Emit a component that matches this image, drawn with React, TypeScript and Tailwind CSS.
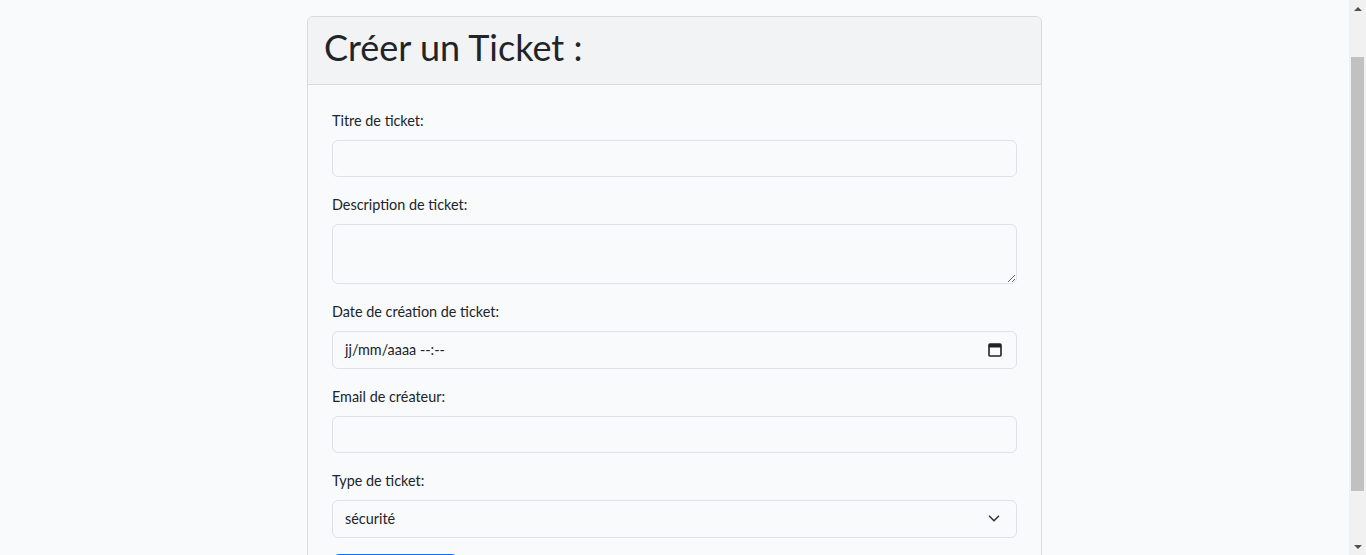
import { useEffect } from 'react';

const font = { fontFamily: 'Lato, "Noto Sans", sans-serif' };

function Label({ text }: { text: string }) {
  return <label className="block mb-2 text-[14.4px] leading-[23px] text-[#212529]">{text}</label>;
}

function CalendarIcon() {
  return (
    <svg width="14" height="14" viewBox="0 0 14 14">
      <rect x="1" y="1" width="12" height="12" rx="1" fill="none" stroke="#222" strokeWidth="1.6" />
      <rect x="1" y="1" width="12" height="3.5" fill="#222" />
    </svg>
  );
}

function Chevron() {
  return (
    <svg width="12" height="9" viewBox="0 0 16 12">
      <path d="M2 3l6 6 6-6" fill="none" stroke="#343a40" strokeWidth="2.2" strokeLinecap="round" strokeLinejoin="round" />
    </svg>
  );
}

// the page scrollbar is hidden in the capture, so draw it over the right edge
function Scrollbar() {
  return (
    <div className="fixed top-0 right-0 h-screen w-[17px] bg-[#f1f1f1] flex flex-col items-center">
      <div className="h-[17px] flex items-center justify-center">
        <div className="w-0 h-0 border-x-[4px] border-x-transparent border-b-[4px] border-b-[#505050]" />
      </div>
      <div className="flex-1 w-full px-[2px] pt-[40px] pb-[47px]">
        <div className="w-full h-full bg-[#c1c1c1]" />
      </div>
      <div className="h-[17px] flex items-center justify-center">
        <div className="w-0 h-0 border-x-[4px] border-x-transparent border-t-[4px] border-t-[#505050]" />
      </div>
    </div>
  );
}

export default function App() {
  useEffect(() => {
    window.scrollTo(0, 51);
  }, []);

  let inputCls =
    'block w-full h-[37.4px] px-3 rounded-[6px] border border-[#dee2e6] bg-[#f8fafc] text-[14.4px] text-[#212529] outline-none';

  return (
    <div className="min-h-screen bg-[#f8fafc] pr-[17px] pt-[67px] pb-[2px]" style={font}>
      <div className="w-[735px] mx-auto border border-[#d9dadb] rounded-[6px] bg-[#f8fafc]">
        <div className="bg-[#f2f3f4] border-b border-[#d9dadb] rounded-t-[6px] px-4 pt-[9px] pb-[15px]">
          <h1 className="text-[36px] leading-[43px] text-[#212529]">Créer un Ticket :</h1>
        </div>
        <div className="p-6">
          <div className="mb-4">
            <Label text="Titre de ticket:" />
            <input type="text" className={inputCls} />
          </div>
          <div className="mb-4">
            <Label text="Description de ticket:" />
            <textarea className="block w-full h-[60px] px-3 py-1.5 rounded-[6px] border border-[#dee2e6] bg-[#f8fafc] text-[14.4px] outline-none" />
          </div>
          <div className="mb-4">
            <Label text="Date de création de ticket:" />
            <div className={inputCls + ' flex items-center justify-between'}>
              <span className="text-[14.4px] text-[#212529]">jj/mm/aaaa --:--</span>
              <span className="mr-[2px] flex"><CalendarIcon /></span>
            </div>
          </div>
          <div className="mb-4">
            <Label text="Email de créateur:" />
            <input type="email" className={inputCls} />
          </div>
          <div className="mb-4">
            <Label text="Type de ticket:" />
            <div className={inputCls + ' flex items-center justify-between'}>
              <span>sécurité</span>
              <span className="mr-[4px] flex"><Chevron /></span>
            </div>
          </div>
          <button type="button" className="h-[38px] w-[125px] ml-px rounded-[6px] bg-[#0d6efd] text-white text-[14.4px]">
            Créer
          </button>
        </div>
      </div>
      <Scrollbar />
    </div>
  );
}
